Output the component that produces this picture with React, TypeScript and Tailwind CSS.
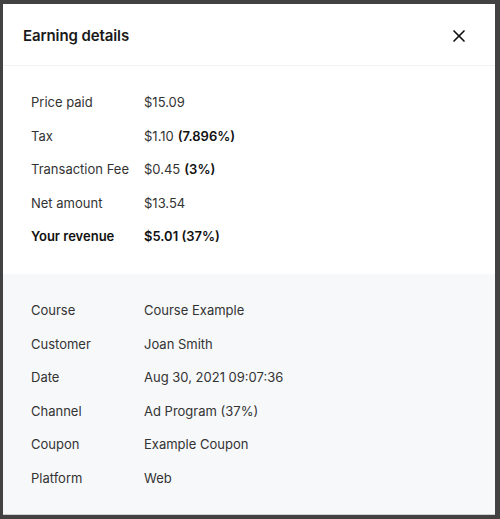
import { X } from "lucide-react";

type Row = { label: string; value: string; extra?: string; bold?: boolean };

const earnings: Row[] = [
  { label: "Price paid", value: "$15.09" },
  { label: "Tax", value: "$1.10", extra: "(7.896%)" },
  { label: "Transaction Fee", value: "$0.45", extra: "(3%)" },
  { label: "Net amount", value: "$13.54" },
  { label: "Your revenue", value: "$5.01 (37%)", bold: true },
];

const details: Row[] = [
  { label: "Course", value: "Course Example" },
  { label: "Customer", value: "Joan Smith" },
  { label: "Date", value: "Aug 30, 2021 09:07:36" },
  { label: "Channel", value: "Ad Program (37%)" },
  { label: "Coupon", value: "Example Coupon" },
  { label: "Platform", value: "Web" },
];

const DetailRow = ({ row }: { row: Row }) => (
  <div className={`flex h-[33.6px] items-center text-[13px] ${row.bold ? "font-semibold text-[#111]" : "text-[#333]"}`}>
    <span className="w-[113px] shrink-0">{row.label}</span>
    <span>
      {row.value}
      {row.extra && <span className="ml-1 font-semibold text-[#111]">{row.extra}</span>}
    </span>
  </div>
);

export default function App() {
  return (
    <div className="h-screen bg-[#424242] pt-[4px] pl-[3px] pr-[5px] pb-[4px]" style={{ fontFamily: "Inter, 'Noto Sans', sans-serif" }}>
      <div className="flex h-full flex-col overflow-hidden bg-white border-b border-[#cfcfcf]">
        <header className="flex h-[62px] shrink-0 items-center justify-between border-b border-[#f2f2f2] pt-[3px] pl-[20px] pr-[26px]">
          <h2 className="text-[15px] font-semibold tracking-[-0.1px] text-[#1a1a1a]">Earning details</h2>
          <button className="text-[#111]">
            <X className="h-[20px] w-[20px]" strokeWidth={2} />
          </button>
        </header>

        <section className="py-[20px] pl-[28px]">
          {earnings.map((r) => (
            <DetailRow key={r.label} row={r} />
          ))}
        </section>

        <section className="flex-1 bg-[#f7f8fa] pt-[20px] pl-[28px]">
          {details.map((r) => (
            <DetailRow key={r.label} row={r} />
          ))}
        </section>
      </div>
    </div>
  );
}
